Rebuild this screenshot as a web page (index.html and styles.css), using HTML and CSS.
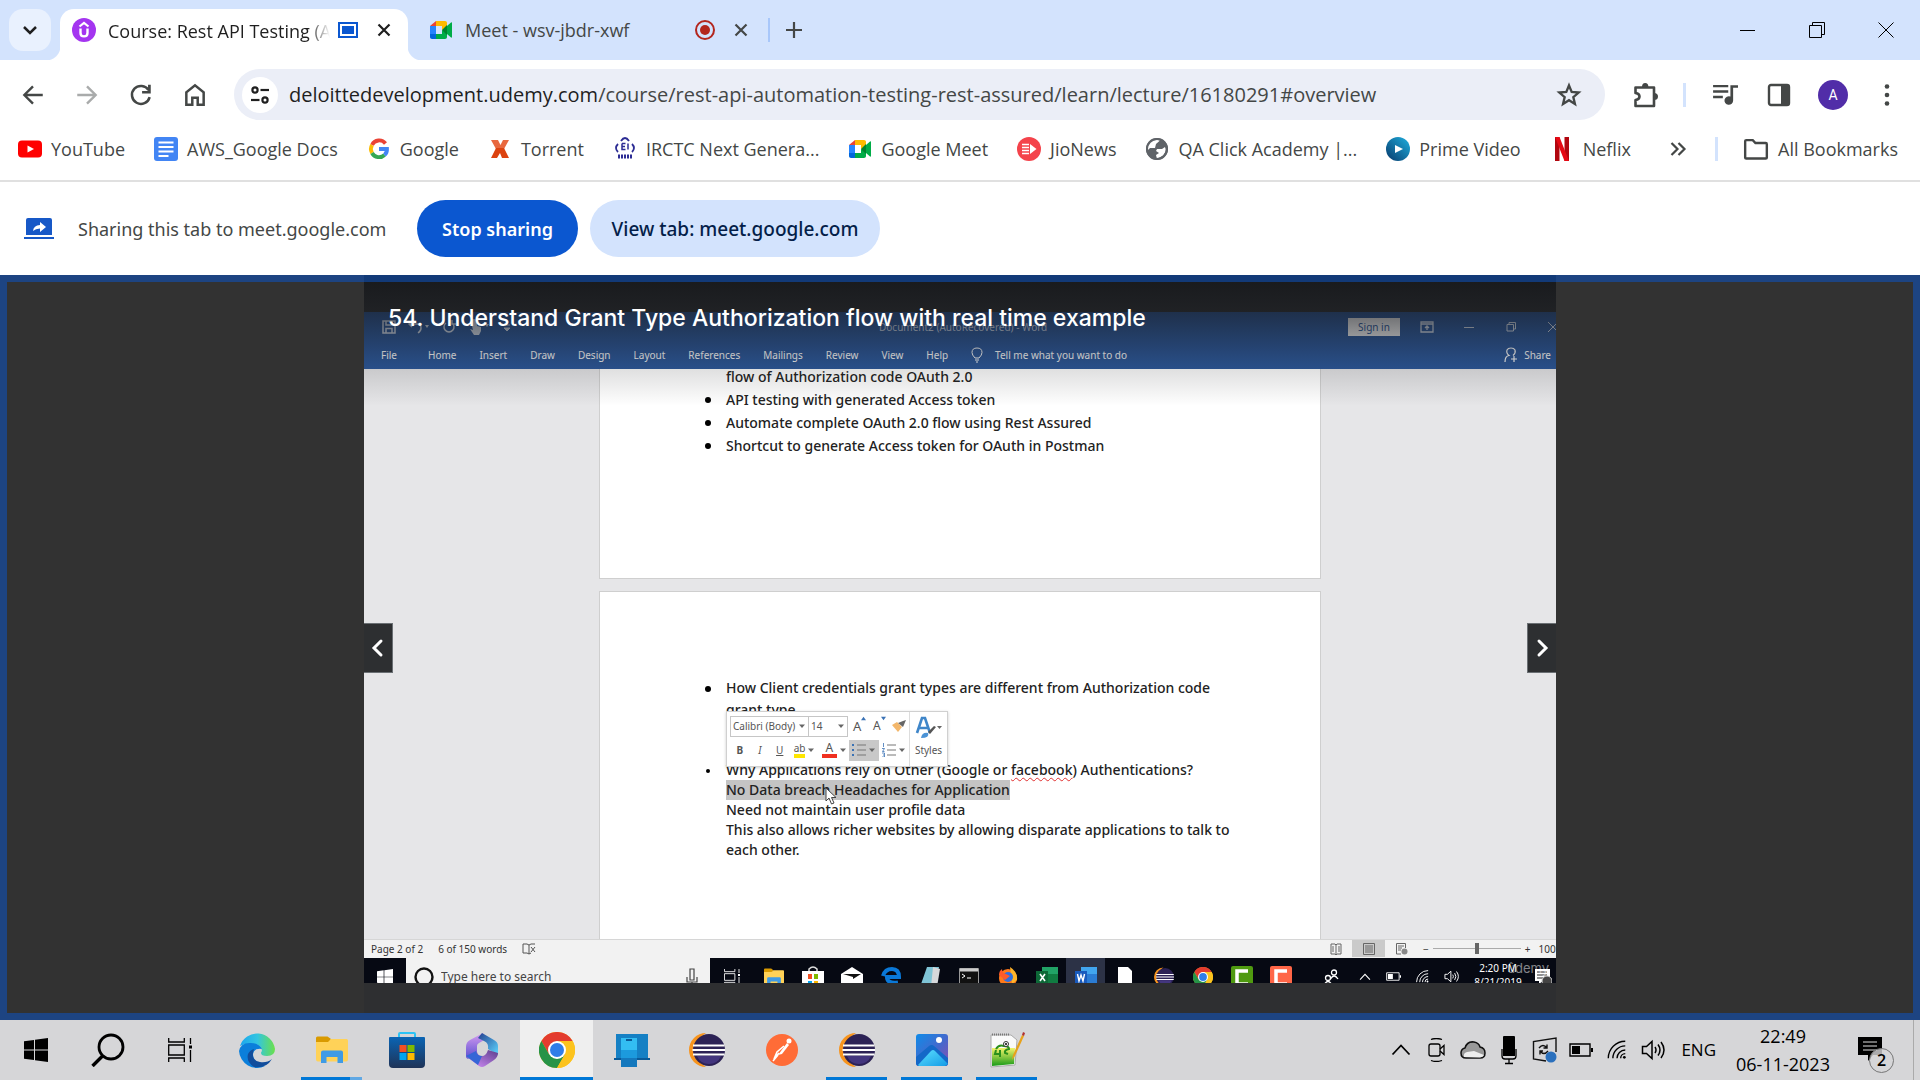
FILE: index.html
```html
<!DOCTYPE html>
<html lang="en">
<head>
<meta charset="utf-8">
<title>Course: Rest API Testing (Automation)</title>
<link rel="stylesheet" href="styles.css">
</head>
<body>
<svg class="defs" aria-hidden="true">
  <defs>
    <linearGradient id="prime" x1="1" y1="0" x2="0" y2="1"><stop offset="0" stop-color="#1fb0e0"/><stop offset="1" stop-color="#06396b"/></linearGradient>
    <linearGradient id="edgeA" x1="0" y1="0" x2="1" y2="0"><stop offset="0" stop-color="#1ba6ee"/><stop offset=".5" stop-color="#33c5e0"/><stop offset="1" stop-color="#6be04a"/></linearGradient>
    <linearGradient id="store" x1="0" y1="0" x2="0" y2="1"><stop offset="0" stop-color="#0a64b4"/><stop offset="1" stop-color="#1f3357"/></linearGradient>
    <linearGradient id="photo" x1="0" y1="0" x2="1" y2="1"><stop offset="0" stop-color="#0f8be8"/><stop offset=".55" stop-color="#4668cc"/><stop offset="1" stop-color="#8b4fb0"/></linearGradient>
    <linearGradient id="peak" x1="0" y1="0" x2="1" y2="1"><stop offset="0" stop-color="#5ce0ff"/><stop offset="1" stop-color="#149be6"/></linearGradient>
    <linearGradient id="officeA" x1="0" y1="0" x2="0" y2="1"><stop offset="0" stop-color="#d69cf0"/><stop offset="1" stop-color="#5a4fd0"/></linearGradient>
    <linearGradient id="officeB" x1="0" y1="0" x2="1" y2="1"><stop offset="0" stop-color="#23408f"/><stop offset="1" stop-color="#5fd6ff"/></linearGradient>
    <linearGradient id="officeC" x1="0" y1="1" x2="1" y2="0"><stop offset="0" stop-color="#d993ff"/><stop offset="1" stop-color="#5c3d8c"/></linearGradient>
    <linearGradient id="grass" x1="0" y1="0" x2="0" y2="1"><stop offset="0" stop-color="#f4f46a"/><stop offset="1" stop-color="#189a18"/></linearGradient>
    <symbol id="meet" viewBox="0 0 24 24">
      <path fill="#ea4335" d="M1 8 7 3v5z"/><path fill="#2684fc" d="M1 8h6v8H1z"/><path fill="#0066da" d="M1 16h6v5H3c-1.200 0-2-.8-2-2z"/>
      <path fill="#ffba00" d="M7 3h9c1.200 0 2 .8 2 2v5l-5 2V8H7z"/><path fill="#00ac47" d="M7 16h6v-4l5 2v5c0 1.200-.8 2-2 2H7z"/>
      <path fill="#00832d" d="m13 12 5-5v10z"/><path fill="#00ac47" d="m18 8 4-3.500c.5-.4 1 0 1 .5v14c0 .5-.5.9-1 .5L18 16z"/>
    </symbol>
    <symbol id="chrome" viewBox="0 0 36 36">
      <circle cx="18" cy="18" r="18" fill="#fcc31e"/><path fill="#e33b2e" d="M2.400 9A18 18 0 0 1 33.600 9H18l-7.800 13.500z"/>
      <path fill="#269347" d="M2.400 9a18 18 0 0 0 15.600 27l7.800-13.500L10.200 22.500z"/><path fill="#fcc31e" d="M33.600 9A18 18 0 0 1 18 36l7.800-13.500L26 9z"/>
      <circle cx="18" cy="18" r="9" fill="#fff"/><circle cx="18" cy="18" r="7" fill="#2f7de9"/>
    </symbol>
    <symbol id="eclipse" viewBox="0 0 36 36">
      <path fill="#f7941e" d="M17 1a17 17 0 0 0 0 34A20 20 0 0 1 17 1z"/><circle cx="20" cy="18" r="16" fill="#2c2255"/>
      <path fill="#43367e" d="M8 24h24a13 13 0 0 1-24 0z"/><path fill="#fff" d="M4 12.500h31.500v2H4zM3.500 17h32.500v2h-32.500zM4 21.500h31.500v2H4z"/>
    </symbol>
    <symbol id="close" viewBox="0 0 24 24"><path d="m6.500 6.500 11 11m0-11-11 11" fill="none" stroke="currentColor" stroke-width="2.200"/></symbol>
    <symbol id="caret" viewBox="0 0 8 8"><path d="M1 2.500h6L4 6z" fill="#666"/></symbol>
    <symbol id="wifi" viewBox="0 0 24 24"><g fill="none" stroke="currentColor" stroke-width="1.500"><path d="M2.500 21A18.500 18.500 0 0 1 21 2.500"/><path d="M7.500 21A13.500 13.500 0 0 1 21 7.500"/><path d="M12 21a9 9 0 0 1 9-9"/><path d="M16 21a5 5 0 0 1 5-5"/></g><circle cx="20" cy="20" r="1.500" fill="currentColor"/></symbol>
    <symbol id="sound" viewBox="0 0 24 24"><g fill="none" stroke="currentColor" stroke-width="1.500"><path d="M1.500 8.500h4L11 3.500v17l-5.500-5h-4z"/><path d="M14 9q2 3 0 6M17 6.500q4 5.500 0 11M20 4q6 8 0 16"/></g></symbol>
    <symbol id="battery" viewBox="0 0 24 24"><path d="M1 6h20v12H1z" fill="none" stroke="currentColor" stroke-width="1.400"/><path d="M3 8h8v8H3zM22 10h2v4h-2z" fill="currentColor"/></symbol>
    <symbol id="up" viewBox="0 0 24 24"><path d="m3.500 16.500 8.500-9 8.500 9" fill="none" stroke="currentColor" stroke-width="1.800"/></symbol>
    <symbol id="windows" viewBox="0 0 24 24"><path fill="currentColor" d="m0 3.300 10-1.400v9.600H0zM11 1.700 24 0v11.500H11zM0 12.500h10v9.600L0 20.700zM11 12.500h13V24l-13-1.700z"/></symbol>
    <symbol id="taskview" viewBox="0 0 24 24"><g fill="none" stroke="currentColor" stroke-width="1.300"><path d="M.7 0v4h15.600V0M.7 24v-4h15.600v4M.7 7h15.600v10H.7z"/><path d="M22.500 0v6M22.500 12v12"/></g><path d="M21 7.500h3v3h-3z" fill="currentColor"/></symbol>
    <symbol id="explorer" viewBox="0 0 32 32"><path fill="#d99a00" d="M0 4q0-1.500 1.500-1.500h10L15 5l-2 3H0z"/><path fill="#ffd258" d="M0 8h12l3-3h15.500Q32 5 32 6.500v19q0 2-2 2H2q-2 0-2-2z"/><path fill="#3f9be5" d="M5 29V18.500q0-2 2-2h18q2 0 2 2V29h-5.500v-6h-11v6z"/></symbol>
  </defs>
</svg>

<header class="browser">
  <div class="tabs">
    <button class="tab-search" aria-label="Search tabs"><svg viewBox="0 0 24 24" width="24" height="24"><path d="m6 9 6 6 6-6" fill="none" stroke="#1f1f1f" stroke-width="2.500"/></svg></button>
    <div class="tab tab-active">
      <svg viewBox="0 0 24 24" width="24" height="24"><circle cx="12" cy="12" r="12" fill="#a435f0"/><path d="M7.500 8.500 12 5l4.500 3.500" fill="none" stroke="#fff" stroke-width="2.200"/><path d="M8.500 10.500V15c0 4.500 7 4.500 7 0v-4.500" fill="none" stroke="#fff" stroke-width="2.400"/></svg>
      <span class="tab-title">Course: Rest API Testing (Automation)</span>
      <svg viewBox="0 0 20 16" width="20" height="16"><path d="M1 1h18v14H1z" fill="none" stroke="#0b57d0" stroke-width="2"/><path d="M4 4h12v8H4z" fill="#0b57d0"/></svg>
      <button class="icon-button" aria-label="Close tab"><svg width="24" height="24"><use href="#close"/></svg></button>
    </div>
    <div class="tab tab-idle">
      <svg width="24" height="24"><use href="#meet"/></svg>
      <span class="tab-name">Meet - wsv-jbdr-xwf</span>
      <svg viewBox="0 0 20 20" width="20" height="20"><circle cx="10" cy="10" r="9" fill="none" stroke="#b3261e" stroke-width="2"/><circle cx="10" cy="10" r="5" fill="#b3261e"/></svg>
      <button class="icon-button" aria-label="Close tab"><svg width="24" height="24"><use href="#close"/></svg></button>
    </div>
    <span class="tab-rule"></span>
    <button class="icon-button new-tab" aria-label="New tab"><svg viewBox="0 0 24 24" width="24" height="24"><path d="M12 4v16M4 12h16" fill="none" stroke="#444746" stroke-width="2.200"/></svg></button>
    <div class="window-controls">
      <button class="icon-button" aria-label="Minimize"><svg viewBox="0 0 16 16" width="16" height="16"><path d="M0 8.500h15" stroke="#000"/></svg></button>
      <button class="icon-button" aria-label="Restore"><svg viewBox="0 0 16 16" width="16" height="16"><path d="M.5 3.500h12v12H.5zM3.500 3.500v-3h12v12h-3" fill="none" stroke="#000"/></svg></button>
      <button class="icon-button" aria-label="Close window"><svg viewBox="0 0 16 16" width="16" height="16"><path d="m.5.5 15 15m0-15-15 15" stroke="#000"/></svg></button>
    </div>
  </div>

  <div class="toolbar">
    <button class="tool" aria-label="Back"><svg viewBox="0 0 24 24" width="26" height="26"><path d="M21 12H4m8-8-8 8 8 8" fill="none" stroke="#444746" stroke-width="2.200"/></svg></button>
    <button class="tool" aria-label="Forward"><svg viewBox="0 0 24 24" width="26" height="26"><path d="M3 12h17m-8-8 8 8-8 8" fill="none" stroke="#a9abab" stroke-width="2.200"/></svg></button>
    <button class="tool" aria-label="Reload"><svg viewBox="0 0 24 24" width="26" height="26"><path d="M19 7.500A8.300 8.300 0 1 0 20 14" fill="none" stroke="#444746" stroke-width="2.300"/><path d="M21 2.500v8h-8V8.300h5.500V2.500z" fill="#444746"/></svg></button>
    <button class="tool" aria-label="Home"><svg viewBox="0 0 24 24" width="26" height="26"><path d="M4 21V9.500L12 3l8 6.500V21h-5.500v-6.500h-5V21z" fill="none" stroke="#444746" stroke-width="2.300"/></svg></button>
    <div class="address">
      <button class="site-info" aria-label="Site information"><svg viewBox="0 0 20 20" width="20" height="20"><g fill="none" stroke="#1f1f1f" stroke-width="2.200"><circle cx="5" cy="5" r="2.600"/><path d="M10.500 5H19"/><circle cx="15" cy="15" r="2.600"/><path d="M1 15h8.500"/></g></svg></button>
      <a class="url" href="#overview"><span class="url-host">deloittedevelopment.udemy.com</span>/course/rest-api-automation-testing-rest-assured/learn/lecture/16180291#overview</a>
      <button class="tool" aria-label="Bookmark this tab"><svg viewBox="0 0 24 24" width="28" height="28"><path d="m12 3.800 2.300 5.600 6 .5-4.600 3.900 1.400 5.900-5.100-3.200-5.100 3.200 1.400-5.900L3.700 9.900l6-.5z" fill="none" stroke="#444746" stroke-width="2"/></svg></button>
    </div>
    <button class="tool" aria-label="Extensions"><svg viewBox="0 0 28 28" width="28" height="28"><path d="M3.500 6.500H22v18.500H3.500v-6q4-.6 4-3.500t-4-3.500z" fill="none" stroke="#444746" stroke-width="2.600" stroke-linejoin="round"/><path d="M10 6q0-4 3.200-4t3.200 4zM22 12q4 0 4 3.500T22 19z" fill="#444746"/></svg></button>
    <span class="tool-rule"></span>
    <button class="tool" aria-label="Media controls"><svg viewBox="0 0 24 24" width="26" height="26"><path d="M1 3.800h14M1 8.800h14M1 13.800h9" stroke="#444746" stroke-width="2.200"/><path d="M17 3h7v2.400h-4.500V17a4 4 0 1 1-2.500-3.600z" fill="#444746"/></svg></button>
    <button class="tool" aria-label="Side panel"><svg viewBox="0 0 24 24" width="24" height="24"><rect x="2" y="2" width="20" height="20" rx="2" fill="none" stroke="#444746" stroke-width="2.400"/><path d="M14 2h8v20h-8z" fill="#444746"/></svg></button>
    <button class="tool" aria-label="Profile"><span class="avatar">A</span></button>
    <button class="tool" aria-label="Menu"><svg viewBox="0 0 24 24" width="24" height="24"><g fill="#444746"><circle cx="12" cy="3.500" r="2.300"/><circle cx="12" cy="12" r="2.300"/><circle cx="12" cy="20.500" r="2.300"/></g></svg></button>
  </div>

  <nav class="bookmarks" aria-label="Bookmarks">
    <a href="#yt"><svg viewBox="0 0 24 24" width="24" height="24"><rect y="3.500" width="24" height="17" rx="4" fill="#f00"/><path d="m9.500 8.500 6.500 3.500-6.500 3.500z" fill="#fff"/></svg>YouTube</a>
    <a href="#docs"><svg viewBox="0 0 24 24" width="24" height="24"><rect width="24" height="24" rx="3" fill="#4285f4"/><path d="M4.500 5.500h15M4.500 10h15M4.500 14.500h15M4.500 19h10" stroke="#fff" stroke-width="2"/></svg>AWS_Google Docs</a>
    <a href="#google"><svg viewBox="0 0 24 24" width="24" height="24"><g fill="none" stroke-width="3.800"><path d="M18.500 6.500A8 8 0 0 0 5 8" stroke="#ea4335"/><path d="M5 8a8 8 0 0 0 0 8" stroke="#fbbc05"/><path d="M5 16a8 8 0 0 0 12.500 2" stroke="#34a853"/><path d="M17.500 18a7.500 7.500 0 0 0 2.500-6h-8" stroke="#4285f4"/></g></svg>Google</a>
    <a href="#torrent"><svg viewBox="0 0 24 24" width="24" height="24"><path fill="#e8683f" d="M3 3h7l2.500 5L15 3h6l-5 9H8z"/><path fill="#dc4310" d="M8 11h8l5 10h-7l-2-5-3 5H3z"/></svg>Torrent</a>
    <a href="#irctc"><svg viewBox="0 0 24 24" width="24" height="24"><g fill="none" stroke="#2c2c94"><path stroke-width="1.800" d="M8 4q4-6 8 0M19 7q4 4 0 8M5 15q-4-4 0-8"/><path stroke-width="1.500" d="M9 6.500v6h3.500M9 6.500h3.500M9 9.500h3M15 6.500v6"/></g><path d="M5 19.500h14" stroke="#2c2c94" stroke-width="4" stroke-dasharray="2 1"/></svg>IRCTC Next Genera...</a>
    <a href="#meet"><svg width="24" height="24"><use href="#meet"/></svg>Google Meet</a>
    <a href="#jio"><svg viewBox="0 0 24 24" width="24" height="24"><circle cx="12" cy="12" r="12" fill="#f4434b"/><path d="M5 7.500h7M5 10.500h7M5 13.500h7M5 16.500h7" stroke="#fff" stroke-width="1.600"/><path d="m13 7 6.500 5-6.500 5z" fill="#fff"/></svg>JioNews</a>
    <a href="#qa"><svg viewBox="0 0 24 24" width="24" height="24"><circle cx="12" cy="12" r="11" fill="#5f6368"/><path d="M6 4.500q6-3 9-1l-4 3.500-1 4H5l-2 2Q2 8 6 4.500zM12 12h5l3-2q2 4-2 8.500L12 22l-1-4 3-2-3-2z" fill="#fff"/><circle cx="12" cy="12" r="10" fill="none" stroke="#5f6368" stroke-width="2"/></svg>QA Click Academy |...</a>
    <a href="#prime"><svg viewBox="0 0 24 24" width="24" height="24"><circle cx="12" cy="12" r="12" fill="url(#prime)"/><path d="m9 8 8 4-8 4z" fill="#fff"/></svg>Prime Video</a>
    <a href="#netflix"><svg viewBox="0 0 24 24" width="24" height="24"><path fill="#b1060f" d="M5 0h4.500v24H5zM14.500 0H19v24h-4.500z"/><path fill="#e50914" d="M5 0h4.500L19 24h-4.500z"/></svg>Neflix</a>
    <button class="icon-button more" aria-label="More bookmarks"><svg viewBox="0 0 24 24" width="24" height="24"><path d="m5.500 6 6 6-6 6m7-12 6 6-6 6" fill="none" stroke="#444746" stroke-width="2.200"/></svg></button>
    <span class="tool-rule"></span>
    <a class="all" href="#all"><svg viewBox="0 0 24 24" width="26" height="26"><path d="M2 20V5q0-1.200 1.200-1.200H9L11.500 6.500H21q1 0 1 1V20q0 .8-1 .8H3Q2 20.800 2 20z" fill="none" stroke="#444746" stroke-width="2.200"/></svg>All Bookmarks</a>
  </nav>
</header>

<section class="infobar" aria-label="Sharing">
  <svg class="share-icon" viewBox="0 0 30 24" width="30" height="24"><path fill="#1758c7" d="M2 3q0-2 2-2h22q2 0 2 2v15H2zM0 20h30v2H0z"/><path d="M9 14q.5-5.500 7-6V5l6 5-6 5v-3.500q-4.500 0-7 2.500z" fill="#fff"/></svg>
  <span class="share-text">Sharing this tab to meet.google.com</span>
  <button class="stop">Stop sharing</button>
  <button class="view">View tab: meet.google.com</button>
</section>

<main class="shared">
  <div class="player">
    <div class="word">
      <div class="word-title">
        <div class="quick">
          <svg viewBox="0 0 14 14" width="14" height="14"><path d="M1 1h12v12H1zM4 1v4h6V1M4 13V8.500h6V13" fill="none" stroke="#fff" stroke-width="1.500"/></svg>
          <svg viewBox="0 0 22 14" width="22" height="14"><path d="M1 4h8q4 0 4 4 0 3-3 5M4 1 1 4l3 3" fill="none" stroke="#fff" stroke-width="1.500"/><path d="M17 5h4l-2 3z" fill="#fff"/></svg>
          <svg viewBox="0 0 14 14" width="14" height="14"><path d="M10 3a5 5 0 1 1-6 0M10 0v4h4" fill="none" stroke="#fff" stroke-width="1.500"/></svg>
          <svg viewBox="0 0 22 16" width="22" height="16"><path d="M3 3a3 3 0 0 1 6 0v4l4 1v4l-2 4H6L2 10l3 1z" fill="#fff"/><path d="M17 5h4l-2 3z" fill="#fff"/></svg>
          <svg viewBox="0 0 10 14" width="10" height="14"><path d="M2 5h6M2 8h6l-3 3z" fill="#fff" stroke="#fff"/></svg>
        </div>
        <span class="word-name">Document2 (AutoRecovered) - Word</span>
        <div class="word-controls">
          <button class="sign-in">Sign in</button>
          <svg viewBox="0 0 14 14" width="14" height="14"><path d="M1 2h12v10H1zM1 4h12M7 10V6M5 8l2-2 2 2" fill="none" stroke="#fff" stroke-width="1.300"/></svg>
          <svg viewBox="0 0 14 14" width="14" height="14"><path d="M2 7.500h10" stroke="#fff"/></svg>
          <svg viewBox="0 0 14 14" width="14" height="14"><path d="M3 4.500h6.500V11H3zM5 4.500v-2h6.500V9h-2" fill="none" stroke="#fff"/></svg>
          <svg viewBox="0 0 14 14" width="14" height="14"><path d="m2 2 10 10m0-10L2 12" stroke="#fff"/></svg>
        </div>
      </div>
      <div class="ribbon">
        <div class="ribbon-tabs">
          <span class="r-file">File</span><span>Home</span><span>Insert</span><span>Draw</span><span>Design</span><span>Layout</span><span>References</span><span>Mailings</span><span>Review</span><span>View</span><span>Help</span>
          <span class="tell"><svg viewBox="0 0 12 16" width="12" height="16"><path d="M4 11Q1 8 1 5.500 1 1 6 1t5 4.500Q11 8 8 11zM4 13h4M5 15h2" fill="none" stroke="#fff"/></svg>Tell me what you want to do</span>
        </div>
        <span class="share"><svg viewBox="0 0 14 16" width="14" height="16"><path d="M1 15q0-6 4-6.500Q2 6 3 3q1-2 4-2t4 2q1 3-2 5.500M10 9v6M7 12h6" fill="none" stroke="#fff" stroke-width="1.200"/></svg>Share</span>
      </div>

      <div class="doc">
        <article class="sheet sheet-one">
          <p>flow of Authorization code OAuth 2.0</p>
          <ul>
            <li>API testing with generated Access token</li>
            <li>Automate complete OAuth 2.0 flow using Rest Assured</li>
            <li>Shortcut to generate Access token for OAuth in Postman</li>
          </ul>
        </article>
        <article class="sheet sheet-two">
          <ul>
            <li>How Client credentials grant types are different from Authorization code<br>grant type</li>
          </ul>
          <ul class="tight">
            <li>Why Applications rely on Other (Google or <span class="typo">facebook</span>) Authentications?<br><mark>No Data breach Headaches for Application</mark><br>Need not maintain user profile data<br>This also allows richer websites by allowing disparate applications to talk to<br>each other.</li>
          </ul>
          <div class="mini">
            <div class="mini-tools">
              <div class="mini-row">
                <span class="pick pick-font"><select aria-label="Font"><option>Calibri (Body)</option></select><svg width="8" height="8"><use href="#caret"/></svg></span>
                <span class="pick pick-size"><select aria-label="Font size"><option>14</option></select><svg width="8" height="8"><use href="#caret"/></svg></span>
                <button class="grow" aria-label="Grow font">A<svg viewBox="0 0 6 6" width="5" height="5"><path d="M0 5h6L3 1z" fill="#3a72b5"/></svg></button>
                <button class="shrink" aria-label="Shrink font">A<svg viewBox="0 0 6 6" width="5" height="5"><path d="M0 1h6L3 5z" fill="#3a72b5"/></svg></button>
                <button aria-label="Format painter"><svg viewBox="0 0 16 14" width="16" height="14"><path d="m1 6 5-3 5 5-4 5z" fill="#f3b76b"/><path d="m7 4 5 4 3-7-3 1z" fill="#666"/></svg></button>
              </div>
              <div class="mini-row">
                <button><b>B</b></button><button><i>I</i></button><button><u>U</u></button>
                <button class="wide ink"><span class="ab">ab</span><svg width="8" height="8"><use href="#caret"/></svg></button>
                <button class="wide ink"><span class="red">A</span><svg width="8" height="8"><use href="#caret"/></svg></button>
                <button class="wide pressed" aria-label="Bullets"><svg viewBox="0 0 14 14" width="14" height="14"><path d="M5 2h9M5 7h9M5 12h9" stroke="#777"/><path d="M0 1h2v2H0zM0 6h2v2H0zM0 11h2v2H0z" fill="#3a72b5"/></svg><svg width="8" height="8"><use href="#caret"/></svg></button>
                <button class="wide" aria-label="Numbering"><svg viewBox="0 0 14 14" width="14" height="14"><path d="M5 2h9M5 7h9M5 12h9" stroke="#777"/><path d="M1.500 0v4M0 5.500h2.500L.5 8.500h2M0 10h2.500v4H0M1 12h1" fill="none" stroke="#3a72b5" stroke-width=".8"/></svg><svg width="8" height="8"><use href="#caret"/></svg></button>
              </div>
            </div>
            <button class="styles"><svg viewBox="0 0 28 24" width="28" height="24"><path d="m2 17 5-15h3l5 15M4 12h9" fill="none" stroke="#3f86c9" stroke-width="2.600"/><path d="m13 16 6-6 2 1-6 7z" fill="#555"/><path d="M6 22q1-6 7-5 2 5-7 5z" fill="#4b93d6"/><path d="M22 10h5l-2.500 3z" fill="#666"/></svg>Styles</button>
          </div>
          <svg class="pointer" viewBox="0 0 12 18" width="12" height="18"><path d="M1 1v13l3-3 2.500 6 2.500-1-2.500-5.500H11z" fill="#fff" stroke="#444"/></svg>
        </article>
      </div>

      <div class="status">
        <span>Page 2 of 2</span><span>6 of 150 words</span>
        <svg viewBox="0 0 14 12" width="14" height="12"><path d="M1 1h4l2 1v9L5 10H1zM7 2l2-1h4M7 11l2-1M9 4l4 5m0-5L9 9" fill="none" stroke="#555"/></svg>
        <div class="zoom">
          <span class="mode"><svg viewBox="0 0 12 12" width="12" height="12"><path d="M1 1h4l1 1 1-1h4v10H7l-1 1-1-1H1zM6 2v9M2 4h2M2 6h2M2 8h2M8 4h2M8 6h2M8 8h2" fill="none" stroke="#666"/></svg></span>
          <span class="mode mode-on"><svg viewBox="0 0 12 12" width="12" height="12"><path d="M.5.5h11v11H.5zM2 3h8M2 5h8M2 7h8M2 9h8" fill="none" stroke="#666"/></svg></span>
          <span class="mode"><svg viewBox="0 0 12 12" width="12" height="12"><path d="M5 11H.5V.5h9V5M2 3h6M2 5h4M2 7h3" fill="none" stroke="#666"/><circle cx="8.500" cy="8.500" r="3" fill="#888"/></svg></span>
          <label class="slider"><span>−</span><input type="range" aria-label="Zoom" min="0" max="100" value="50"><span>+</span></label>
          <span class="percent">100%</span>
        </div>
      </div>

      <div class="inner-bar"><div class="inner-row">
        <span class="inner-start"><svg width="16" height="16"><use href="#windows"/></svg></span>
        <label class="inner-search"><svg viewBox="0 0 20 20" width="20" height="20"><circle cx="10" cy="10" r="8.500" fill="none" stroke="#111" stroke-width="2.400"/></svg><input type="text" aria-label="Search" placeholder="Type here to search"><svg viewBox="0 0 12 18" width="12" height="18"><path d="M4 1h4v11H4zM1 9v5h10V9M6 14v4" fill="none" stroke="#444" stroke-width="1.200"/></svg></label>
        <span class="app app-first"><svg width="16" height="16"><use href="#taskview"/></svg></span>
        <span class="app"><svg width="20" height="22"><use href="#explorer"/></svg></span>
        <span class="app"><svg viewBox="0 0 22 22" width="22" height="22"><path d="M7 6V3q4-4 8 0v3" fill="none" stroke="#ddd" stroke-width="1.500"/><path fill="#fff" d="M0 5h22v17H0z"/><path fill="#f25022" d="M6 8h4v5H6z"/><path fill="#7fba00" d="M12 8h4v5h-4z"/><path fill="#00a4ef" d="M6 15h4v5H6z"/><path fill="#ffb900" d="M12 15h4v5h-4z"/></svg></span>
        <span class="app"><svg viewBox="0 0 22 20" width="22" height="20"><path fill="#fff" d="m0 7 11-7 11 7v13H0z"/><path d="M2 7h18l-8 5v-2z" fill="#111"/></svg></span>
        <span class="app"><svg viewBox="0 0 20 20" width="20" height="20"><path d="M2 9Q4 2 11 2q7 0 7 8H6q0 7 11 5.500" fill="none" stroke="#0a78d7" stroke-width="4"/></svg></span>
        <span class="app"><svg viewBox="0 0 20 20" width="20" height="20"><path d="M7 0h12l-4 20H0z" fill="#7fc4d6"/><path d="m13 0 7 2-3 18h-6z" fill="#d6d8da"/></svg></span>
        <span class="app"><svg viewBox="0 0 20 18" width="20" height="18"><path fill="#111" stroke="#999" d="M.5.5h19v17H.5z"/><path d="M1 2h18" stroke="#ccc" stroke-width="3"/><path d="m3 6 3 2-3 2m5 0h4" fill="none" stroke="#fff"/></svg></span>
        <span class="app"><svg viewBox="0 0 20 20" width="20" height="20"><circle cx="10" cy="11" r="9" fill="#ff7a1a"/><path d="M12 0q8 5 7 13l-5 4z" fill="#ffb52a"/><circle cx="10" cy="10" r="5" fill="#2f6fe0"/><path d="M1 8Q1 4 4 2q0 4 4 5l4 2-5 4z" fill="#ff5a2a"/></svg></span>
        <span class="app"><svg viewBox="0 0 22 20" width="22" height="20"><path fill="#21a366" d="M6 0h16v20H6z"/><path fill="#107c41" d="M6 7h16v13H6z"/><path fill="#0d6837" d="M0 4h12v13H0z"/><path d="m4 7 5 7m0-7-5 7" stroke="#fff" stroke-width="1.600"/></svg></span>
        <span class="app app-on"><svg viewBox="0 0 22 20" width="22" height="20"><path fill="#41a5ee" d="M6 0h16v8H6z"/><path fill="#2b7cd3" d="M6 7h16v13H6z"/><path fill="#185abd" d="M0 4h12v13H0z"/><path d="m2.500 7 1.500 7 2-6 2 6L9.500 7" fill="none" stroke="#fff" stroke-width="1.400"/></svg></span>
        <span class="app"><svg viewBox="0 0 16 20" width="16" height="20"><path fill="#fff" d="M1 0h10l4 4v16H1z"/></svg></span>
        <span class="app"><svg width="20" height="20"><use href="#eclipse"/></svg></span>
        <span class="app"><svg width="20" height="20"><use href="#chrome"/></svg></span>
        <span class="app"><svg viewBox="0 0 22 22" width="22" height="22"><rect width="22" height="22" rx="2" fill="#4f9a10"/><path d="M17 5H6v13h11" fill="none" stroke="#fff" stroke-width="3.500"/></svg></span>
        <span class="app"><svg viewBox="0 0 22 22" width="22" height="22"><rect width="22" height="22" rx="2" fill="#ff6647"/><path d="M17 5H6v13h11" fill="none" stroke="#fff" stroke-width="3.500"/></svg></span>
        <div class="inner-tray">
          <span class="people"><svg viewBox="0 0 16 16" width="16" height="16"><g fill="none" stroke="#fff" stroke-width="1.300"><circle cx="11" cy="3.500" r="2.500"/><path d="M7.500 10q3.500-6 7.500 0"/><circle cx="5" cy="9" r="2.500"/><path d="M1 16q4-7 8 0"/></g></svg></span>
          <span><svg width="14" height="14"><use href="#up"/></svg></span>
          <span><svg width="15" height="15"><use href="#battery"/></svg></span>
          <span><svg width="15" height="15"><use href="#wifi"/></svg></span>
          <span><svg width="15" height="15"><use href="#sound"/></svg></span>
          <span class="inner-clock">2:20 PM<br>8/21/2019</span>
          <span class="inner-note"><svg viewBox="0 0 18 18" width="18" height="18"><path d="M1 1h15v12H9l-4 3v-3H1z" fill="#fff"/><path d="M3 4h10M3 7h10M3 10h6" stroke="#222"/><circle cx="13" cy="13" r="5" fill="#444" stroke="#ccc"/></svg></span>
        </div>
      </div></div>
    </div>
    <div class="shade"><h1>54. Understand Grant Type Authorization flow with real time example</h1></div>
    <span class="brand">ûdemy</span>
    <button class="step step-back" aria-label="Previous lecture"><svg viewBox="0 0 24 24" width="24" height="24"><path d="m15 5-7 7 7 7" fill="none" stroke="#fff" stroke-width="3" stroke-linecap="round"/></svg></button>
    <button class="step step-next" aria-label="Next lecture"><svg viewBox="0 0 24 24" width="24" height="24"><path d="m9 5 7 7-7 7" fill="none" stroke="#fff" stroke-width="3" stroke-linecap="round"/></svg></button>
  </div>
</main>

<footer class="taskbar">
  <button class="sys" aria-label="Start"><svg width="24" height="24"><use href="#windows"/></svg></button>
  <button class="sys" aria-label="Search"><svg viewBox="0 0 34 34" width="34" height="34"><circle cx="20" cy="14" r="12" fill="none" stroke="#000" stroke-width="2.800"/><path d="M11.500 23 1.500 33" stroke="#000" stroke-width="3.400"/></svg></button>
  <button class="sys sys-last" aria-label="Task view"><svg width="24" height="24"><use href="#taskview"/></svg></button>
  <button class="pin" aria-label="Edge"><svg viewBox="0 0 36 36" width="36" height="36"><path d="M1 14A18 18 0 0 1 36 17q0 7-8 7-6 0-6-3 0-1 1-2 0-6-8-7Q6 11 1 14z" fill="url(#edgeA)"/><path d="M0 19Q2 10 12 11q8 0 11 6-8-1-9 5 0 10 12 12A18 18 0 0 1 0 19z" fill="#0b7fdb"/><path d="M15 17q-4 11 6 13 7 1 12-3-6 10-18 8-8-5-6-13 2-4 6-5z" fill="#114d9c"/></svg></button>
  <button class="pin open many" aria-label="File Explorer"><svg width="32" height="32"><use href="#explorer"/></svg></button>
  <button class="pin" aria-label="Microsoft Store"><svg viewBox="0 0 36 36" width="36" height="36"><path d="M10 7V2q0-1 1-1h14q1 0 1 1v5" fill="none" stroke="#2cc3f5" stroke-width="2"/><path d="M0 6q0-1 1-1h34q1 0 1 1v26q0 4-4 4H4q-4 0-4-4z" fill="url(#store)"/><path fill="#f25022" d="M10.500 13h7v7h-7z"/><path fill="#7fba00" d="M18.500 13h7v7h-7z"/><path fill="#00a4ef" d="M10.500 21h7v7h-7z"/><path fill="#ffb900" d="M18.500 21h7v7h-7z"/></svg></button>
  <button class="pin" aria-label="Microsoft 365"><svg viewBox="0 0 34 36" width="34" height="36"><path d="M18 1 5 8q-4 2-4 7v9q0 4 4 2l7-4v-8q0-2 2-3l7-4z" fill="url(#officeA)"/><path d="m17 1 12 7q4 2 4 6v9l-10-6q1-6-4-8L13 6z" fill="url(#officeB)"/><path d="m2 25 10-5q1 4 5 4 4 0 6-6l10 3q0 4-4 7l-9 6q-3 2-6 0z" fill="url(#officeC)"/><path d="m1 24 10-5q1 5 6 5l-4 9z" fill="#3466d6"/></svg></button>
  <button class="pin open full" aria-label="Chrome"><svg width="36" height="36"><use href="#chrome"/></svg></button>
  <button class="pin" aria-label="Phone Link"><svg viewBox="0 0 36 36" width="36" height="36"><path fill="#1580c4" d="M2 2h32v24H2z"/><path fill="#0a5a98" d="M0 26h36v2H0z"/><path fill="#33bdf2" d="M7 6h16v28H7z"/><path fill="#1c9add" d="M7 18h16v8H7z"/><path fill="#1478bd" d="M7 26h16v9H7z"/><path d="M12 8h6" stroke="#0a5a98" stroke-width="2"/></svg></button>
  <button class="pin" aria-label="Eclipse"><svg width="36" height="36"><use href="#eclipse"/></svg></button>
  <button class="pin" aria-label="Postman"><svg viewBox="0 0 36 36" width="36" height="36"><circle cx="18" cy="18" r="16" fill="#ff6c37"/><circle cx="25" cy="9" r="2.500" fill="#fff"/><path d="m23 11 2 2-7 9-4 1z" fill="#fff"/><path d="m20 14-7 6-3 7 5-6M14 23l-5 6" fill="none" stroke="#fff" stroke-width="1.600"/></svg></button>
  <button class="pin open" aria-label="Eclipse workspace"><svg width="36" height="36"><use href="#eclipse"/></svg></button>
  <button class="pin open" aria-label="Photos"><svg viewBox="0 0 32 34" width="32" height="34"><rect y="1" width="32" height="32" rx="3" fill="url(#photo)"/><circle cx="23" cy="7" r="3" fill="#fff"/><path d="m0 24 13-11q3-2 5 0l14 12v5q0 3-3 3H3q-3 0-3-3z" fill="#1468c8"/><path d="m2 32 13-14q2-2 4 0l13 13-3 2H3z" fill="url(#peak)"/></svg></button>
  <button class="pin open" aria-label="Notepad++"><svg viewBox="0 0 36 36" width="36" height="36"><path d="M2 3h20l6 5-2 25-24 2z" fill="#fafafa" stroke="#aaa"/><path d="M3 2.500h18" stroke="#777" stroke-width="2" stroke-dasharray="1 1"/><path d="M3 16h23l-1 16-22 2z" fill="url(#grass)"/><path d="M7 17q3-5 8-3 5 0 5 3-5 1-4 4l3 1M7 18l-1 4h4M11 18v7" fill="none" stroke="#2a8f1c" stroke-width="2"/><circle cx="17" cy="12" r="2.500" fill="#fff" stroke="#333"/><circle cx="17" cy="12" r="1" fill="#000"/><path d="m23 28 1-5L33 3l2 1-9 20z" fill="#e8a21a"/><path d="m33 3 1-3 2 1-1 3z" fill="#b03030"/></svg></button>

  <div class="tray">
    <span class="cell"><svg width="24" height="24"><use href="#up"/></svg></span>
    <span class="cell"><svg viewBox="0 0 24 24" width="24" height="24"><g fill="none" stroke="#000" stroke-width="1.300"><rect x="4" y="6" width="11" height="12" rx="2"/><path d="m15 11 4-3.500v9L15 13M6 1.500q5-2 11 0M6 22.500q5 2 11 0"/></g></svg></span>
    <span class="cell"><svg viewBox="0 0 26 24" width="26" height="24"><path d="M6 20q-5 0-5-5 0-4 4-5 2-7 9-6 5 1 6 5 5 1 5 6 0 5-5 5z" fill="#999" stroke="#111" stroke-width="1.500"/><path d="M4 19q-1-4 3-5l7-1 10 4q-1 2-4 2.500z" fill="#eee"/></svg></span>
    <span class="cell"><svg viewBox="0 0 24 30" width="24" height="30"><path d="M7 1h10q1 0 1 1v19H6V2q0-1 1-1z" fill="#000"/><path d="M5 14v7q0 3 3 3h8q3 0 3-3v-7M12 24v5M8 28.500h8" fill="none" stroke="#000" stroke-width="1.300"/></svg></span>
    <span class="cell"><svg viewBox="0 0 26 28" width="26" height="28"><path d="M14 25 1.500 23V5.500L24 2v14" fill="none" stroke="#111" stroke-width="1.400"/><path d="M7 12q4-5 8 0m0-3.500V12h-3.500M16 15q-4 5-8 0m0 3.500V15h3" fill="none" stroke="#111" stroke-width="1.400"/><circle cx="19" cy="21" r="5.500" fill="#2a70bd"/></svg></span>
    <span class="cell"><svg width="24" height="24"><use href="#battery"/></svg></span>
    <span class="cell"><svg width="22" height="22"><use href="#wifi"/></svg></span>
    <span class="cell"><svg width="24" height="24"><use href="#sound"/></svg></span>
    <span class="lang">ENG</span>
    <span class="clock">22:49<br>06-11-2023</span>
    <button class="notes" aria-label="Notifications"><svg viewBox="0 0 24 26" width="24" height="26"><path d="M0 0h24v18H15l-5 6v-6H0z" fill="#000"/><path d="M5 5h14M5 9h14M5 13h14" stroke="#ddd"/></svg><span class="count">2</span></button>
    <span class="peek"></span>
  </div>
</footer>
</body>
</html>
```
FILE: styles.css
```css
* { box-sizing: border-box; }
body {
  margin: 0;
  min-height: 100vh;
  display: flex;
  flex-direction: column;
  background: #fff;
  color: #444746;
  font: 18px/24px "Open Sans", sans-serif;
  overflow-x: hidden;
}
button { border: 0; padding: 0; background: none; font: inherit; color: inherit; }
a { color: inherit; text-decoration: none; }
svg { display: block; flex: none; }
.defs { position: absolute; width: 0; height: 0; }
.icon-button, .tool { display: flex; align-items: center; justify-content: center; flex: none; }

/* Tab strip */
.tabs { display: flex; align-items: center; height: 60px; padding: 0 0 0 9px; background: #d3e3fd; }
.tab-search { display: flex; align-items: center; justify-content: center; width: 42px; height: 42px; border-radius: 14px; background: #e9f1fe; }
.tab { display: flex; align-items: center; }
.tab-active { position: relative; align-self: flex-end; width: 348px; height: 51px; margin-left: 9px; padding: 0 12px 9px; border-radius: 14px 14px 0 0; background: #fff; color: #1f1f1f; }
.tab-active::before, .tab-active::after { content: ""; position: absolute; bottom: 0; width: 14px; height: 14px; }
.tab-active::before { left: -14px; background: radial-gradient(circle at 0 0, transparent 14px, #fff 15px); }
.tab-active::after { right: -14px; background: radial-gradient(circle at 100% 0, transparent 14px, #fff 15px); }
.tab-title { flex: 1; margin: 2px 8px 0 12px; overflow: hidden; white-space: nowrap; -webkit-mask-image: linear-gradient(90deg, #000 90%, transparent); mask-image: linear-gradient(90deg, #000 90%, transparent); }
.tab .icon-button { width: 24px; margin-left: 14px; }
.tab-idle { width: 345px; padding-left: 21px; }
.tab-name { flex: 1; margin-left: 12px; }
.tab-rule { width: 2px; height: 24px; margin: 0 12px 0 15px; background: #a8c7fa; }
.window-controls { display: flex; margin-left: auto; }
.window-controls .icon-button { width: 69px; height: 58px; }

/* Toolbar */
.toolbar { display: flex; align-items: center; padding: 9px 6px 8px; }
.tool { width: 54px; height: 50px; }
.address { display: flex; align-items: center; flex: 1; height: 51px; margin: 0 14px 0 12px; padding: 0 9px 0 8px; border-radius: 26px; background: #ebeef7; }
.site-info { display: flex; align-items: center; justify-content: center; flex: none; width: 36px; height: 36px; border-radius: 50%; background: #fff; }
.url { flex: 1; margin-left: 11px; font-size: 20px; line-height: 30px; white-space: nowrap; overflow: hidden; }
.url-host { color: #1f1f1f; }
.tool-rule { width: 3px; height: 24px; margin: 0 12px 0 10px; background: #d3e3fd; flex: none; }
.avatar { display: flex; align-items: center; justify-content: center; width: 30px; height: 30px; border-radius: 50%; background: #512da8; color: #fff; font: 14px Roboto, sans-serif; }

/* Bookmarks */
.bookmarks { display: flex; align-items: center; gap: 29px; height: 54px; padding: 0 22px 10px 18px; border-bottom: 2px solid #e0e0e0; white-space: nowrap; }
.bookmarks a { display: flex; align-items: center; gap: 9px; }
.bookmarks .more { margin-left: auto; }
.bookmarks .tool-rule { margin: 0 -4px; }

/* Sharing bar */
.infobar { display: flex; align-items: center; height: 93px; padding-left: 24px; font-family: "Noto Sans", sans-serif; white-space: nowrap; }
.share-text { width: 339px; margin-left: 24px; }
.infobar button { height: 57px; border-radius: 29px; }
.stop { width: 161px; background: #0b57d0; color: #fff; font-weight: 600; }
.view { width: 290px; margin-left: 12px; background: #d3e3fd; color: #041e49; font-size: 19px; font-weight: 500; }

/* Shared page */
.shared { display: flex; flex: 1; justify-content: center; border: 7px solid #1d4482; background: #323232; }
.player { position: relative; display: flex; flex-direction: column; width: 1192px; max-width: 100%; padding: 30px 0; background: #2e2f31; }
.player::before { content: ""; position: absolute; top: -7px; left: 0; right: 0; height: 7px; background: #123a78; }
.word { display: flex; flex-direction: column; flex: 1; overflow: hidden; background: #e6e6e8; color: #222; font: 500 14px/22px "Noto Sans", sans-serif; }
.word-title { display: flex; align-items: center; justify-content: space-between; height: 30px; padding: 0 0 1px 18px; background: #2b579a; color: #c9d4e6; font: 10px/14px "Noto Sans", sans-serif; }
.quick { display: flex; align-items: center; gap: 12px; width: 467px; opacity: .8; }
.word-name { flex: 1; margin-left: 30px; }
.word-controls { display: flex; align-items: center; gap: 28px; margin-right: -4px; }
.word-controls svg { opacity: .8; }
.sign-in { width: 52px; height: 18px; margin-right: -8px; background: #f4f4f4; color: #2b579a; }
.ribbon { display: flex; align-items: center; justify-content: space-between; height: 27px; padding: 0 5px 1px 17px; background: #2b579a; color: #fff; font: 10px/14px "Noto Sans", sans-serif; white-space: nowrap; }
.ribbon-tabs { display: flex; align-items: center; gap: 23px; }
.r-file { margin-right: 8px; }
.tell, .share { display: flex; align-items: center; gap: 6px; }
.tell { gap: 12px; }

.doc { display: flex; flex-direction: column; flex: 1; align-items: center; gap: 12px; overflow: hidden; }
.sheet { position: relative; width: 722px; max-width: 90%; border: 1px solid #cfcfcf; background: #fff; white-space: nowrap; }
.sheet-one { border-top: 0; padding: 0 0 121px 126px; margin-top: -4px; line-height: 23px; }
.sheet-two { flex: 1; border-bottom: 0; padding: 85px 0 0 126px; }
.sheet p, .sheet ul { margin: 0; padding: 0; list-style: none; }
.sheet li { position: relative; }
.sheet li::before { content: ""; position: absolute; left: -21px; top: 9px; width: 6px; height: 6px; border-radius: 50%; background: #000; }
.sheet .tight { margin-top: 39px; line-height: 20px; }
.sheet .tight li::before { width: 4px; height: 4px; left: -20px; }
mark { display: inline-block; background: #c4c4c4; color: inherit; }
.typo { text-decoration: underline wavy #e03030 1px; text-underline-offset: 2px; }

.mini { position: absolute; left: 126px; top: 119px; display: flex; width: 222px; height: 56px; border: 1px solid #d0d0d0; background: #fff; box-shadow: 0 1px 3px #0003; color: #555; font: 10px/14px "Noto Sans", sans-serif; }
.mini-tools { width: 182px; padding: 2px 0 0 3px; }
.mini-row { display: flex; align-items: center; height: 24px; }
.mini-row button { display: flex; align-items: center; justify-content: center; width: 20px; height: 21px; }
.mini-row .wide { width: 30px; gap: 2px; }
.pick { display: flex; align-items: center; height: 21px; padding-right: 2px; border: 1px solid #c6c6c6; }
.pick select { flex: 1; min-width: 0; border: 0; padding: 0 0 0 2px; background: none; color: #555; font: inherit; appearance: none; }
.pick-font { width: 80px; }
.pick-size { width: 40px; margin: 0 2px 0 -1px; }
.grow { font-size: 13px; }
.shrink { font-size: 12px; }
.grow svg, .shrink svg { align-self: flex-start; }
.mini-row .pressed { background: #c8c8c8; }
.ab { border-bottom: 4px solid #fee600; line-height: 12px; }
.red { padding: 0 4px; border-bottom: 4px solid #f03020; line-height: 12px; font-size: 12px; }
.styles { display: flex; flex-direction: column; align-items: center; flex: 1; padding-top: 4px; border-left: 1px solid #ddd; line-height: 20px; }
.pointer { position: absolute; left: 225px; top: 195px; }

.status { display: flex; align-items: center; gap: 15px; height: 19px; padding: 0 0 1px 7px; border-top: 1px solid #d6d6d6; background: #f2f2f2; color: #333; font: 10px/14px "Noto Sans", sans-serif; white-space: nowrap; }
.zoom { display: flex; align-items: center; align-self: stretch; margin-left: auto; width: 237px; overflow: hidden; }
.mode { display: flex; align-items: center; justify-content: center; flex: none; width: 33px; height: 18px; }
.mode-on { background: #cacaca; }
.slider { display: flex; align-items: center; flex: none; gap: 4px; margin-left: 5px; }
.slider input { width: 88px; height: 12px; margin: 0; appearance: none; background: linear-gradient(#aaa, #aaa) center / 100% 1px no-repeat; }
.slider input::-webkit-slider-thumb { appearance: none; width: 4px; height: 11px; background: #666; }
.percent { margin-left: 8px; }

.inner-bar { height: 25px; overflow: hidden; background: #060913; color: #fff; }
.inner-row { display: flex; align-items: center; height: 37px; }
.inner-row > span, .inner-tray > span { display: flex; align-items: center; justify-content: center; flex: none; }
.inner-start { width: 42px; }
.inner-search { display: flex; align-items: center; align-self: stretch; flex: none; width: 304px; padding: 0 12px 0 8px; background: #f2f2f2; }
.inner-search input { flex: 1; min-width: 0; margin-left: 5px; border: 0; padding: 0 0 0 2px; background: none; font: 12px "Noto Sans", sans-serif; }
.inner-search input::placeholder { color: #444; }
.app { width: 39px; height: 37px; }
.inner-row > .app-first { width: 44px; }
.app-on { background: #2c3246; }
.inner-tray { display: flex; align-items: center; align-self: stretch; margin-left: auto; }
.inner-tray > span { width: 29px; }
.inner-tray > .people { width: 38px; }
.inner-tray > .inner-clock { width: 64px; height: 28px; align-self: flex-start; margin-top: 3px; font: 10px/14px "Noto Sans", sans-serif; text-align: center; }
.inner-tray > .inner-note { width: 26px; }

.shade { position: absolute; inset: 0 0 auto; height: 124px; background: linear-gradient(rgba(20, 22, 25, .8), rgba(24, 26, 30, .64) 24%, rgba(28, 29, 31, .14) 70%, transparent); }
.shade h1 { margin: 20px 0 0 24px; color: #fff; font: 500 23px/32px Inter, sans-serif; white-space: nowrap; }
.brand { position: absolute; right: 7px; bottom: 35px; color: #ffffff80; font: 13px/20px Inter, sans-serif; }
.step { position: absolute; top: 341px; display: flex; align-items: center; justify-content: center; width: 29px; height: 50px; border: 1px solid #6a6f73; background: #2d2f31; }
.step-back { left: 0; border-left: 0; }
.step-next { right: 0; border-right: 0; }

/* Desktop taskbar */
.taskbar { display: flex; height: 60px; background: #d6d6d8; color: #000; }
.taskbar button { display: flex; align-items: center; justify-content: center; flex: none; }
.sys { width: 72px; }
.sys-last { margin-right: 4px; }
.pin { position: relative; width: 73px; margin-right: 2px; }
.open::after { content: ""; position: absolute; left: 6px; right: 6px; bottom: 0; height: 3px; background: #0078d7; }
.many::after { background: linear-gradient(90deg, #0078d7 80%, #60a8e4 80%); }
.full { background: #efefef; }
.full::after { left: 0; right: 0; }
.tray { display: flex; align-items: center; margin-left: auto; }
.cell { display: flex; align-items: center; justify-content: center; width: 36px; }
.lang { margin-left: 10px; font-size: 17px; }
.clock { width: 134px; text-align: center; font-size: 18px; line-height: 28px; }
.tray .notes { position: relative; width: 24px; height: 26px; margin: 0 31px 0 8px; }
.count { position: absolute; left: 11px; top: 11px; width: 25px; height: 25px; border: 1px solid #777; border-radius: 50%; background: #d6d6d8cc; font-size: 16px; font-weight: 600; line-height: 23px; text-align: center; }
.peek { width: 7px; height: 60px; border-left: 1px solid #aaa; }
```
